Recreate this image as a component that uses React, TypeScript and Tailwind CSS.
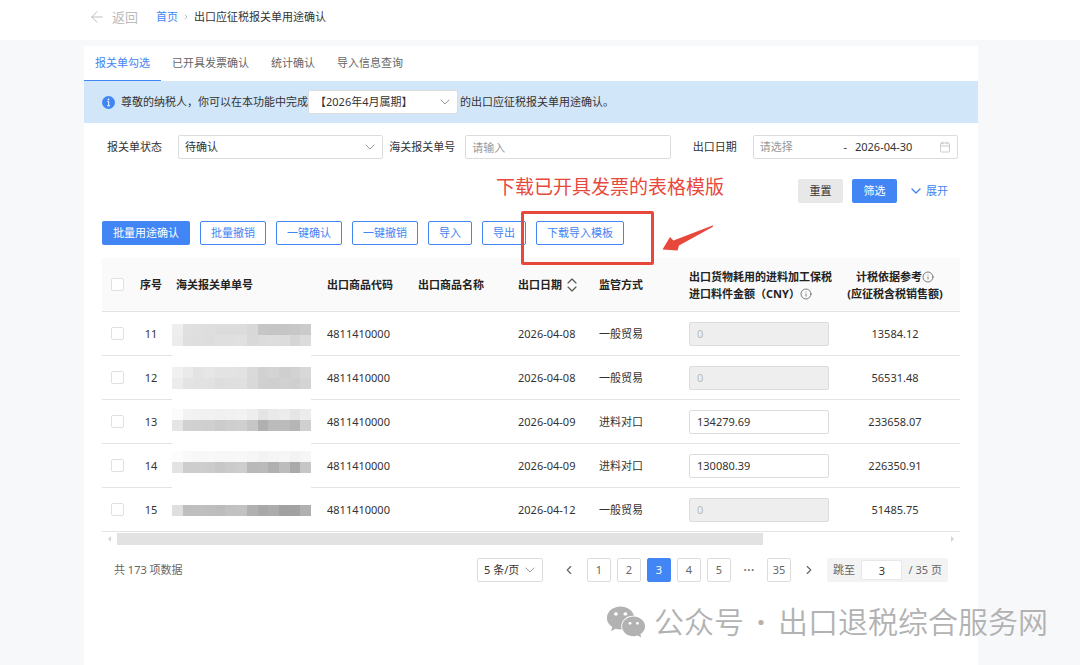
import { useState } from "react";
import type { ReactNode } from "react";
import clsx from "clsx";
import {
  ArrowLeft,
  Calendar,
  ChevronDown,
  ChevronLeft,
  ChevronRight,
  ChevronUp,
  Info,
} from "lucide-react";
import { FaWeixin } from "react-icons/fa";

interface Declaration {
  id: number;
  code: string;
  date: string;
  mode: string;
  amount: string;
  base: string;
  maskOffset: string;
  mask: string[][];
}

// Greys of the masked declaration numbers, one hex pair per block
const declarations: Declaration[] = [
  {
    id: 11,
    code: "4811410000",
    date: "2026-04-08",
    mode: "一般贸易",
    amount: "",
    base: "13584.12",
    maskOffset: "pt-3",
    mask: [
      "ee e0 df de dc dc dc d8 c6 c5 c5 c7 cb".split(" "),
      "ec df de dd df df e0 d9 dc dd dc d5 dc".split(" "),
    ],
  },
  {
    id: 12,
    code: "4811410000",
    date: "2026-04-08",
    mode: "一般贸易",
    amount: "",
    base: "56531.48",
    maskOffset: "pt-[11px]",
    mask: [
      "f0 ea e3 e6 e3 e3 e2 da d1 d4 cf d2 d8".split(" "),
      "ec e3 e2 e2 dd df e0 d9 d0 cf d1 cf d4".split(" "),
    ],
  },
  {
    id: 13,
    code: "4811410000",
    date: "2026-04-09",
    mode: "进料对口",
    amount: "134279.69",
    base: "233658.07",
    maskOffset: "pt-[9px]",
    mask: [
      "fb f2 f1 f1 f0 f1 f2 ee e4 e9 ec e5 ec".split(" "),
      "e5 d1 d0 cf cb ce cf c6 b0 bb bb b5 d0".split(" "),
    ],
  },
  {
    id: 14,
    code: "4811410000",
    date: "2026-04-09",
    mode: "进料对口",
    amount: "130080.39",
    base: "226350.91",
    maskOffset: "pt-[7px]",
    mask: [
      "fc f9 f7 f8 f7 f7 f8 f6 f3 f5 f6 f3 f6".split(" "),
      "e3 cd cd cc c7 ca cd b9 ba b0 bc aa c6".split(" "),
    ],
  },
  {
    id: 15,
    code: "4811410000",
    date: "2026-04-12",
    mode: "一般贸易",
    amount: "",
    base: "51485.75",
    maskOffset: "pt-1.5",
    mask: [
      "ff ff ff ff ff ff ff ff ff ff ff ff ff".split(" "),
      "df be bf be bc c1 c2 b0 a8 ac a1 a2 b0".split(" "),
    ],
  },
];

const tabs = ["报关单勾选", "已开具发票确认", "统计确认", "导入信息查询"];
const actions = ["批量撤销", "一键确认", "一键撤销", "导入", "导出"];
const pages = [1, 2, 3, 4, 5];

interface SelectBoxProps {
  id: string;
  option: string;
  label?: string;
  className?: string;
}

function SelectBox({ id, option, label, className }: SelectBoxProps) {
  return (
    <div className={clsx("relative h-6", className)}>
      <select
        id={id}
        aria-label={label}
        className="h-full w-full appearance-none rounded-xs border border-[#dcdcdc] bg-white pl-1.5 pr-5 text-[#333]"
      >
        <option>{option}</option>
      </select>
      <ChevronDown
        className="pointer-events-none absolute right-[5px] top-1 size-4 text-[#999]"
        strokeWidth={1.5}
      />
    </div>
  );
}

function OutlineButton({ children }: { children: ReactNode }) {
  return (
    <button className="h-6 whitespace-nowrap rounded-xs border border-[#4285f4] bg-white px-2.5 text-[#4285f4]">
      {children}
    </button>
  );
}

function NoticeIcon() {
  return (
    <svg className="mr-1.5 size-[13px] shrink-0" viewBox="0 0 13 13">
      <circle cx="6.5" cy="6.5" r="6.5" fill="#4285f4" />
      <circle cx="6.5" cy="3.4" r="0.9" fill="#fff" />
      <path
        d="M5.300 5.500H6.700V9.700M5.200 9.800H8"
        fill="none"
        stroke="#fff"
        strokeWidth="1"
      />
    </svg>
  );
}

interface MaskProps {
  rows: string[][];
  offset: string;
  last: boolean;
}

function Mask({ rows, offset, last }: MaskProps) {
  return (
    <div
      className={clsx(
        "absolute left-0.5 right-[7px] top-0 z-10 bg-white",
        offset,
        last ? "bottom-0" : "-bottom-px"
      )}
    >
      {rows.map((row, i) => (
        <div key={i} className="flex h-[11px]">
          {row.map((c, j) => (
            <span
              key={j}
              className="flex-1"
              style={{ backgroundColor: `#${c}${c}${c}` }}
            />
          ))}
        </div>
      ))}
    </div>
  );
}

function Annotation() {
  return (
    <div className="pointer-events-none">
      <p className="absolute -left-10 -top-12 whitespace-nowrap text-[19px] leading-7 text-[#e8483c]">
        下载已开具发票的表格模版
      </p>
      <div className="absolute -left-[15px] -top-2.5 h-[54px] w-[133px] rounded-xs border-3 border-[#e8483c]" />
      <svg
        className="absolute left-[126px] top-1"
        width="52"
        height="28"
        viewBox="0 0 52 28"
        fill="#e8483c"
      >
        <path d="M0.5 24.5 L8 12 L11.5 15.500 L50.5 0.5 Q52 0.5 50.5 2 L17 20.5 L15.500 25.500 Z" />
      </svg>
    </div>
  );
}

function App() {
  const [activeTab, setActiveTab] = useState(tabs[0]);
  const [page, setPage] = useState(3);

  return (
    <div className="relative flex min-h-screen flex-col bg-[#f7f8fa] font-['Noto_Sans','Noto_Sans_CJK_SC',sans-serif] text-[11px] leading-4 text-[#333]">
      <header className="flex h-10 items-center bg-white pb-1.5 pl-[88px]">
        <button className="flex items-center gap-1.5 text-[13px] text-[#bbb]">
          <ArrowLeft className="size-[18px]" strokeWidth={1.25} />
          返回
        </button>
        <nav className="ml-[18px] flex items-center gap-1">
          <a href="#" className="text-[#4285f4]">
            首页
          </a>
          <ChevronRight className="size-2 text-[#999]" />
          <span>出口应征税报关单用途确认</span>
        </nav>
      </header>

      <main className="ml-[84px] mr-[102px] mt-1.5 flex-1 bg-white">
        <div role="tablist" className="flex h-[35px]">
          {tabs.map((tab) => (
            <button
              key={tab}
              role="tab"
              aria-selected={tab === activeTab}
              onClick={() => setActiveTab(tab)}
              className={clsx(
                "border-b px-[11px]",
                tab === activeTab
                  ? "border-[#4285f4] text-[#4285f4]"
                  : "border-transparent text-[#666]"
              )}
            >
              {tab}
            </button>
          ))}
        </div>

        <div className="flex h-[42px] items-center bg-[#d2e6fa] pl-[18px]">
          <NoticeIcon />
          <span className="whitespace-nowrap">
            尊敬的纳税人，你可以在本功能中完成
          </span>
          <SelectBox
            id="period"
            label="属期"
            option="【2026年4月属期】"
            className="mr-0.5 w-[150px]"
          />
          <span className="whitespace-nowrap">
            的出口应征税报关单用途确认。
          </span>
        </div>

        <form className="grid grid-cols-[71px_1fr_82px_1fr_82px_1fr] items-center pl-[23px] pr-5 pt-3">
          <label htmlFor="status">报关单状态</label>
          <SelectBox id="status" option="待确认" className="min-w-0" />
          <label htmlFor="number" className="pl-1.5">
            海关报关单号
          </label>
          <input
            id="number"
            placeholder="请输入"
            className="h-6 w-full min-w-0 rounded-xs border border-[#dcdcdc] px-1.5 placeholder:text-[#999]"
          />
          <label htmlFor="start" className="pl-[22px]">
            出口日期
          </label>
          <div className="flex h-6 min-w-0 items-center rounded-xs border border-[#dcdcdc] px-1.5">
            <input
              id="start"
              placeholder="请选择"
              className="w-0 min-w-0 flex-1 placeholder:text-[#999]"
            />
            <span className="px-2">-</span>
            <input
              aria-label="结束日期"
              defaultValue="2026-04-30"
              className="w-[84px] min-w-0"
            />
            <Calendar className="size-3 text-[#bbb]" strokeWidth={1.5} />
          </div>
        </form>

        <div className="flex justify-end pr-[30px] pt-5">
          <button className="h-6 w-[45px] rounded-xs bg-[#e8e8e8]">
            重置
          </button>
          <button className="ml-[9px] h-6 w-[45px] rounded-xs bg-[#4285f4] text-white">
            筛选
          </button>
          <button className="ml-[11px] flex items-center gap-0.5 text-[#4285f4]">
            <ChevronDown className="size-4" />
            展开
          </button>
        </div>

        <div className="flex gap-2.5 pl-[18px] pt-[18px]">
          <button className="h-6 whitespace-nowrap rounded-xs bg-[#4285f4] px-[11px] text-white">
            批量用途确认
          </button>
          {actions.map((action) => (
            <OutlineButton key={action}>{action}</OutlineButton>
          ))}
          <div className="relative">
            <OutlineButton>下载导入模板</OutlineButton>
            <Annotation />
          </div>
        </div>

        <div className="mx-[18px] mt-[13px]">
          <table className="w-full table-fixed border-separate border-spacing-0 text-left">
            <colgroup>
              <col className="w-[30px]" />
              <col className="w-[38px]" />
              <col className="w-[148px]" />
              <col className="w-[91px]" />
              <col className="w-[100px]" />
              <col className="w-[81px]" />
              <col className="w-[90px]" />
              <col className="w-[158px]" />
              <col className="w-[122px]" />
            </colgroup>
            <thead className="text-[#222]">
              <tr className="h-[54px] bg-[#fafafa] *:border-b *:border-[#e3e3e3] *:font-bold">
                <th className="pl-[9px]">
                  <input
                    type="checkbox"
                    aria-label="全选"
                    className="block size-[13px] appearance-none rounded-xs border border-[#e0e0e0] bg-white"
                  />
                </th>
                <th className="text-center">序号</th>
                <th className="pl-1.5">海关报关单单号</th>
                <th className="pl-[9px]">出口商品代码</th>
                <th className="pl-[9px]">出口商品名称</th>
                <th className="whitespace-nowrap pl-[9px]">
                  <span className="flex items-center gap-0.5">
                    出口日期
                    <span className="flex flex-col text-[#555]">
                      <ChevronUp className="-my-1 size-4" strokeWidth={1.75} />
                      <ChevronDown
                        className="-my-1 size-4"
                        strokeWidth={1.75}
                      />
                    </span>
                  </span>
                </th>
                <th className="pl-[9px]">监管方式</th>
                <th className="whitespace-nowrap pl-[9px] leading-[17px]">
                  出口货物耗用的进料加工保税
                  <br />
                  进口料件金额（CNY）
                  <Info
                    className="inline size-3 align-[-2px] text-[#555]"
                    strokeWidth={1.5}
                  />
                </th>
                <th className="whitespace-nowrap pr-2 text-center leading-[17px]">
                  计税依据参考
                  <Info
                    className="inline size-3 align-[-2px] text-[#555]"
                    strokeWidth={1.5}
                  />
                  <br />
                  (应征税含税销售额)
                </th>
              </tr>
            </thead>
            <tbody>
              {declarations.map((d, i) => (
                <tr
                  key={d.id}
                  className="h-11 *:border-b *:border-[#e3e3e3]"
                >
                  <td className="pl-[9px]">
                    <input
                      type="checkbox"
                      aria-label={`选择 ${d.id}`}
                      className="block size-[13px] appearance-none rounded-xs border border-[#e0e0e0] bg-white"
                    />
                  </td>
                  <td className="text-center">{d.id}</td>
                  <td className="relative">
                    <Mask
                      rows={d.mask}
                      offset={d.maskOffset}
                      last={i === declarations.length - 1}
                    />
                  </td>
                  <td className="pl-[9px]">{d.code}</td>
                  <td />
                  <td className="pl-[9px]">{d.date}</td>
                  <td className="pl-[9px]">{d.mode}</td>
                  <td className="px-[9px]">
                    <input
                      aria-label={`金额 ${d.id}`}
                      defaultValue={d.amount || "0"}
                      disabled={!d.amount}
                      className="block h-6 w-full rounded-xs border border-[#dcdcdc] px-[7px] disabled:bg-[#eeeeee] disabled:text-[#bbb]"
                    />
                  </td>
                  <td className="pr-2 text-center">{d.base}</td>
                </tr>
              ))}
            </tbody>
          </table>

          <div className="mt-px flex h-3 items-center px-1.5">
            <span className="border-y-3 border-r-3 border-y-transparent border-r-[#d4d4d4]" />
            <div className="mx-1.5 h-full flex-1">
              <div className="h-full w-[78%] bg-[#e2e2e2]" />
            </div>
            <span className="border-y-3 border-l-3 border-y-transparent border-l-[#d4d4d4]" />
          </div>
        </div>

        <div className="flex items-center gap-1.5 px-[30px] pt-[13px] text-[#666]">
          <span className="mr-auto">共 173 项数据</span>
          <SelectBox
            id="page-size"
            label="每页条数"
            option="5 条/页"
            className="mr-2 w-[66px]"
          />
          <button
            aria-label="上一页"
            className="flex size-6 items-center justify-center"
          >
            <ChevronLeft className="size-3.5" />
          </button>
          {pages.map((p) => (
            <button
              key={p}
              onClick={() => setPage(p)}
              className={clsx(
                "size-6 rounded-xs border",
                p === page
                  ? "border-[#4285f4] bg-[#4285f4] text-white"
                  : "border-[#dcdcdc]"
              )}
            >
              {p}
            </button>
          ))}
          <span className="w-6 text-center text-[14px]">···</span>
          <button
            onClick={() => setPage(35)}
            className="size-6 rounded-xs border border-[#dcdcdc]"
          >
            35
          </button>
          <button
            aria-label="下一页"
            className="flex size-6 items-center justify-center"
          >
            <ChevronRight className="size-3.5" />
          </button>
          <div className="flex h-6 w-[121px] items-center justify-between rounded-xs bg-[#f3f3f3] px-1.5">
            <label htmlFor="jump">跳至</label>
            <input
              id="jump"
              defaultValue="3"
              className="h-5 w-[41px] rounded-xs border border-[#e8e8e8] bg-white text-center text-[#333]"
            />
            <span>/ 35 页</span>
          </div>
        </div>
      </main>

      <div className="pointer-events-none absolute bottom-[23px] right-8 flex h-10 items-center whitespace-nowrap text-[30px] font-[350] text-[#b2b2b2]">
        <FaWeixin className="mr-2 size-10" />
        <span>公众号</span>
        <span className="w-[34px] text-center font-bold">·</span>
        <span>出口退税综合服务网</span>
      </div>
    </div>
  );
}

export default App;
